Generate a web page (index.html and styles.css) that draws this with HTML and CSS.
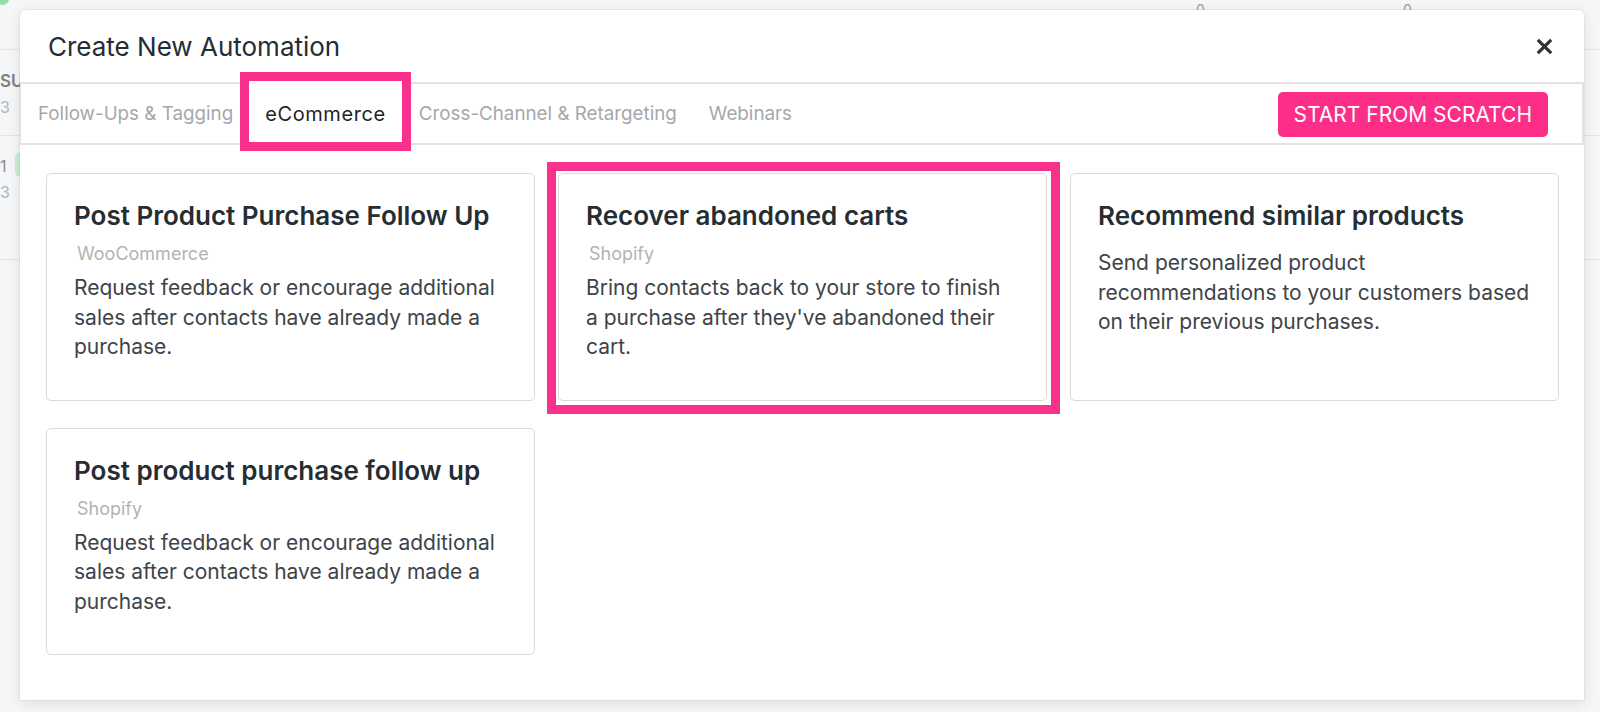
FILE: index.html
```html
<!DOCTYPE html>
<html lang="en">
<head>
<meta charset="utf-8">
<title>Create New Automation</title>
<link rel="stylesheet" href="styles.css">
</head>
<body>
<div class="page">
  <div class="bg-row bg-row-top">
    <span class="bg-dot"></span>
    <span class="bg-zero bg-zero-a">0</span>
    <span class="bg-zero bg-zero-b">0</span>
  </div>
  <div class="bg-row bg-row-1">
    <div class="bg-cell">
      <span class="bg-strong">SU</span>
      <span class="bg-light">3</span>
    </div>
  </div>
  <div class="bg-row bg-row-2">
    <div class="bg-cell">
      <span class="bg-num">1</span>
      <span class="bg-light">3</span>
    </div>
    <span class="bg-pill"></span>
  </div>
</div>

<div class="modal">
  <header class="modal-header">
    <h1 class="modal-title">Create New Automation</h1>
    <button class="close" aria-label="Close">
      <svg width="17" height="17" viewBox="0 0 17 17"><path d="M1.8 1.8 L15.2 15.2 M15.2 1.8 L1.8 15.2" stroke="#2e343a" stroke-width="3.2" fill="none"/></svg>
    </button>
  </header>
  <nav class="tabbar">
    <ul class="tabs">
      <li class="tab">Follow-Ups &amp; Tagging</li>
      <li class="tab tab-active"><span>eCommerce</span></li>
      <li class="tab">Cross-Channel &amp; Retargeting</li>
      <li class="tab">Webinars</li>
    </ul>
    <button class="btn-scratch">START FROM SCRATCH</button>
  </nav>
  <section class="cards">
    <article class="card">
      <h2 class="card-title">Post Product Purchase Follow Up</h2>
      <div class="card-sub">WooCommerce</div>
      <p class="card-desc">Request feedback or encourage additional<br>sales after contacts have already made a<br>purchase.</p>
    </article>
    <article class="card card-marked">
      <h2 class="card-title">Recover abandoned carts</h2>
      <div class="card-sub">Shopify</div>
      <p class="card-desc">Bring contacts back to your store to finish<br>a purchase after they've abandoned their<br>cart.</p>
    </article>
    <article class="card">
      <h2 class="card-title">Recommend similar products</h2>
      <p class="card-desc card-desc-nosub">Send personalized product<br>recommendations to your customers based<br>on their previous purchases.</p>
    </article>
    <article class="card">
      <h2 class="card-title">Post product purchase follow up</h2>
      <div class="card-sub">Shopify</div>
      <p class="card-desc">Request feedback or encourage additional<br>sales after contacts have already made a<br>purchase.</p>
    </article>
  </section>
</div>
</body>
</html>
```
FILE: styles.css
```css
* { box-sizing: border-box; }
html, body { margin: 0; padding: 0; }
body {
  width: 1600px;
  height: 712px;
  overflow: hidden;
  background: #f5f6f7;
  font-family: Inter, "Noto Sans", sans-serif;
  position: relative;
}

/* background page */
.page { width: 1600px; }
.bg-row { position: relative; border-bottom: 1px solid #e4e5e6; }
.bg-row-top { height: 50px; }
.bg-row-1 { height: 86px; }
.bg-row-2 { height: 124px; }
.bg-dot {
  position: absolute; left: -4px; top: -8px;
  width: 13px; height: 13px; border-radius: 50%;
  background: #8fe0a6;
}
.bg-zero {
  position: absolute; top: 1px;
  font-size: 14px; color: #9a9da0;
}
.bg-zero-a { left: 1196px; }
.bg-zero-b { left: 1403px; }
.bg-cell {
  display: flex; flex-direction: column; align-items: flex-start;
  padding-top: 18px;
  line-height: 26px;
}
.bg-strong { font-size: 17px; font-weight: 600; color: #7d8186; }
.bg-light { font-size: 16px; color: #b2b5b8; }
.bg-num { font-size: 16px; color: #8a8e92; }
.bg-row-2 .bg-cell { padding-top: 17px; }
.bg-pill {
  position: absolute; left: 15px; top: 16px;
  width: 30px; height: 25px; border-radius: 6px;
  background: #c9f0d3;
}

/* modal */
.modal {
  position: absolute;
  left: 20px; top: 10px;
  width: 1564px; height: 690px;
  background: #fff;
  border-radius: 6px 6px 0 0;
  box-shadow: 0 3px 14px rgba(0,0,0,0.10), 0 0 0 1px rgba(0,0,0,0.04);
  display: flex; flex-direction: column;
}
.modal-header {
  height: 72px;
  display: flex; align-items: center; justify-content: space-between;
  padding: 0 31px 0 28px;
}
.modal-title {
  margin: 0;
  font-size: 26px; font-weight: 400;
  color: #262c33;
}
.close {
  border: 0; background: none; padding: 0; margin: 0;
  width: 17px; height: 17px; display: flex;
}

.tabbar {
  height: 63px;
  border: 2px solid #e3e3e3;
  border-left-width: 1px;
  display: flex; align-items: center; justify-content: space-between;
  padding: 0 34px 0 1px;
}
.tabs {
  list-style: none; margin: 0; padding: 0;
  display: flex; align-self: stretch;
}
.tab {
  display: flex; align-items: center;
  padding: 0 16px;
  font-size: 18.8px; color: #a5a8ab;
}
.tab-active {
  position: relative;
  padding: 0 17px 0 16px;
  color: #1f2427; font-size: 20px; letter-spacing: 0.6px;
}
.tab-active span { position: relative; z-index: 2; }
.tab-active::before,
.tab-active::after {
  content: "";
  position: absolute;
}
.tab-active::before { background: #fff; z-index: 1; left: 0; right: 0; top: -4px; bottom: 0; }
.tab-active::after {
  left: -9px; right: -8px; top: -12px; bottom: -8px;
  border: 9px solid #f7318c; z-index: 3;
}

.btn-scratch {
  height: 45px;
  margin-top: 2px;
  padding: 0 16px;
  border: 0; border-radius: 5px;
  background: #fd2e87;
  color: #fff;
  font-family: inherit;
  font-size: 21px;
}

.cards {
  display: grid;
  grid-template-columns: repeat(3, 1fr);
  column-gap: 23px;
  row-gap: 27px;
  padding: 28px 25px 0 26px;
}
.card {
  position: relative;
  border: 1px solid #dadada;
  border-radius: 5px;
  padding: 27px 16px 38px 27px;
}
.card-marked::after {
  content: "";
  position: absolute;
  left: -12px; right: -14px; top: -12px; bottom: -14px;
  border: 9px solid #f7318c;
}
.card-title {
  margin: 0;
  font-size: 26px; font-weight: 600;
  line-height: 30px;
  color: #262d33;
}
.card-sub {
  margin-top: 11px;
  padding-left: 3px;
  font-size: 18px; line-height: 24px;
  color: #b3b3b3;
}
.card-desc {
  margin: 7px 0 0;
  font-size: 21px; line-height: 29.5px;
  color: #3e4348;
  white-space: nowrap;
}
.card-desc-nosub { margin-top: 17px; }
```
